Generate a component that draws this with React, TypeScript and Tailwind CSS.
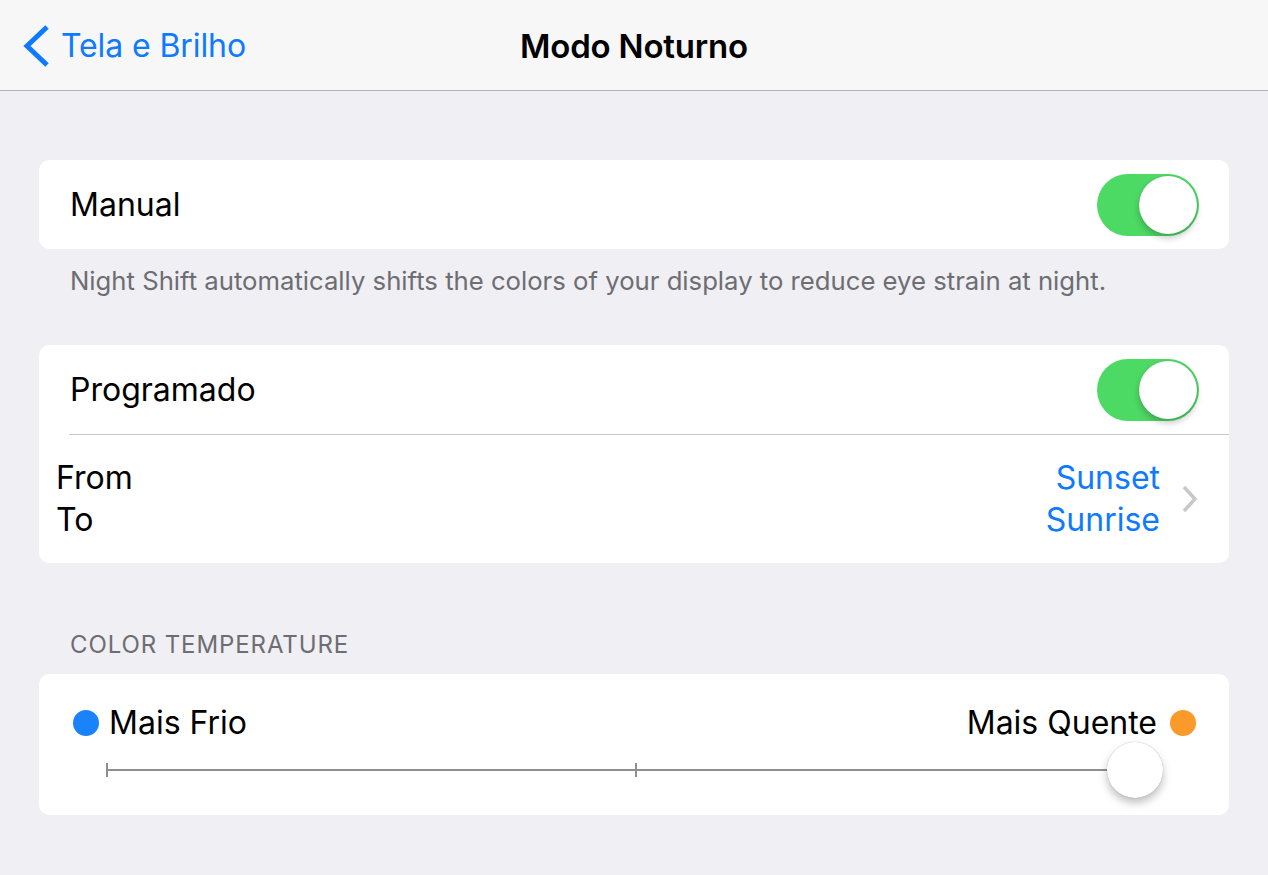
import React from 'react';

const font = { fontFamily: 'Inter, "Noto Sans", sans-serif' };

function Toggle() {
  return (
    <div className="relative h-[62px] w-[102px] shrink-0 rounded-full bg-[#4cd964]">
      <div className="absolute right-[2px] top-[2px] h-[58px] w-[58px] rounded-full bg-white shadow-[0_4px_6px_rgba(0,0,0,0.22),0_0_1px_rgba(0,0,0,0.2)]" />
    </div>
  );
}

function Card({ children, className = '' }: { children: React.ReactNode; className?: string }) {
  return <div className={`rounded-[10px] bg-white ${className}`}>{children}</div>;
}

export default function App() {
  return (
    <div className="min-h-[875px] w-full bg-[#efeff4] text-black" style={font}>
      {/* nav bar */}
      <header className="relative flex h-[91px] items-center border-b border-[#b2b2b2] bg-[#f7f7f8] px-[22px]">
        <div className="flex items-center gap-[9px] pt-[2px] text-[#0e7afe]">
          <svg width="30" height="44" viewBox="0 0 30 44" fill="none">
            <path d="M25 3 L5 22 L25 41" stroke="#0e7afe" strokeWidth="5" strokeLinecap="butt" strokeLinejoin="miter" />
          </svg>
          <span className="text-[32px] leading-none tracking-[-0.1px]">Tela e Brilho</span>
        </div>
        <h1 className="absolute left-1/2 top-1/2 -translate-x-1/2 -translate-y-1/2 pt-[2px] text-[33px] font-semibold leading-none tracking-[-0.2px]">
          Modo Noturno
        </h1>
      </header>

      <main className="px-[39px] pt-[69px]">
        <Card className="flex h-[89px] items-center justify-between pl-[31px] pr-[30px]">
          <span className="text-[32px] leading-none">Manual</span>
          <Toggle />
        </Card>

        <p className="h-[96px] pl-[31px] pt-[17px] text-[25.7px] leading-[30px] text-[#6d6d72]">
          Night Shift automatically shifts the colors of your display to reduce eye strain at night.
        </p>

        <Card>
          <div className="flex h-[89px] items-center justify-between pl-[31px] pr-[30px]">
            <span className="text-[32px] leading-none">Programado</span>
            <Toggle />
          </div>
          <div className="ml-[30px] h-px bg-[#c8c7cc]" />
          <div className="flex h-[128px] items-center justify-between pl-[17px] pr-[31px]">
            <div className="text-[32px] leading-[42px]">
              <div>From</div>
              <div>To</div>
            </div>
            <div className="flex items-center gap-[22px]">
              <div className="text-right text-[32px] leading-[42px] text-[#0e7afe]">
                <div>Sunset</div>
                <div>Sunrise</div>
              </div>
              <svg width="16" height="28" viewBox="0 0 16 28" fill="none">
                <path d="M2 2 L13 14 L2 26" stroke="#c7c7cc" strokeWidth="3.5" />
              </svg>
            </div>
          </div>
        </Card>

        <div className="pl-[31px] pt-[69px] pb-[16px] text-[24px] uppercase leading-[26px] tracking-[0.9px] text-[#6d6d72]">
          Color Temperature
        </div>

        <Card className="relative h-[141px]">
          <div className="flex items-center justify-between pl-[34px] pr-[33px] pt-[36px]">
            <div className="flex items-center gap-[10px]">
              <span className="h-[26px] w-[26px] rounded-full bg-[#1a82fb]" />
              <span className="text-[32px] leading-[26px]">Mais Frio</span>
            </div>
            <div className="flex items-center gap-[13px]">
              <span className="text-[32px] leading-[26px]">Mais Quente</span>
              <span className="h-[26px] w-[26px] rounded-full bg-[#fa9a2a]" />
            </div>
          </div>
          <div className="relative ml-[67px] mr-[66px] mt-[27px] h-[14px]">
            <div className="absolute left-0 right-0 top-[6px] h-[2px] bg-[#8e8e93]" />
            <div className="absolute left-0 top-0 h-[14px] w-[2px] bg-[#8e8e93]" />
            <div className="absolute left-1/2 top-0 h-[14px] w-[2px] bg-[#8e8e93]" />
            <div className="absolute right-0 top-[-21px] h-[56px] w-[56px] rounded-full bg-white shadow-[0_5px_8px_rgba(0,0,0,0.25),0_0_1px_rgba(0,0,0,0.3)]" />
          </div>
        </Card>
      </main>
    </div>
  );
}
